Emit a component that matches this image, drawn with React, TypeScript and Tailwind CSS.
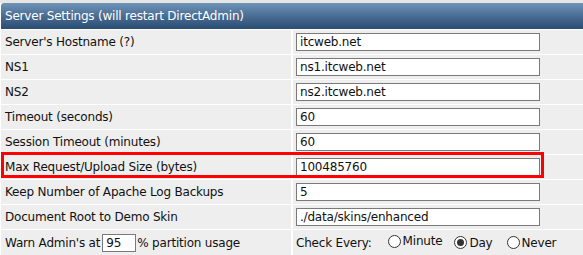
import React from "react";

const font = { fontFamily: "'DejaVu Sans', Verdana, sans-serif" };

function Row({ label, value }: { label: React.ReactNode; value?: string; }) {
  return (
    <>
      <div className="bg-[#eeeeee] h-[24px] flex items-center pl-[4px] text-[12px] tracking-[-0.2px] text-[#111]">{label}</div>
      <div className="bg-[#eeeeee] h-[24px] flex items-center pl-[3px]">
        {value !== undefined && (
          <div className="w-[244px] h-[18px] border border-[#7a7a7a] bg-white flex items-center pl-[3px] text-[12px] tracking-[-0.2px] text-[#111]">
            {value}
          </div>
        )}
      </div>
    </>
  );
}

function Radio({ checked, label }: { checked?: boolean; label: string }) {
  return (
    <span className="inline-flex items-center">
      <span className="w-[13px] h-[13px] rounded-full border border-[#333] bg-white flex items-center justify-center mr-[2px]">
        {checked && <span className="w-[7px] h-[7px] rounded-full bg-[#333]" />}
      </span>
      <span>{label}</span>
    </span>
  );
}

export default function App() {
  return (
    <div className="w-[583px] h-[255px] bg-white overflow-hidden relative" style={font}>
      <div className="bg-[#e6e6e6] h-[3px]" />
      <div className="grid grid-cols-[290px_1fr] gap-x-[2px] gap-y-[1px] bg-white pl-[1px]">
        <div className="col-span-2 h-[26px] rounded-tl-[3px] bg-gradient-to-b from-[#7094b8] via-[#4a6d93] to-[#2b4d72] flex items-center pl-[4px] text-white text-[12px] tracking-[-0.2px]">
          Server Settings (will restart DirectAdmin)
        </div>
        <Row label="Server's Hostname (?)" value="itcweb.net" />
        <Row label="NS1" value="ns1.itcweb.net" />
        <Row label="NS2" value="ns2.itcweb.net" />
        <Row label="Timeout (seconds)" value="60" />
        <Row label="Session Timeout (minutes)" value="60" />
        <Row label="Max Request/Upload Size (bytes)" value="100485760" />
        <Row label="Keep Number of Apache Log Backups" value="5" />
        <Row label="Document Root to Demo Skin" value="./data/skins/enhanced" />
        <div className="bg-[#eeeeee] h-[25px] flex items-center pl-[4px] text-[12px] tracking-[-0.2px] text-[#111]">
          <span>Warn Admin's at</span>
          <span className="ml-[2px] mr-[1px] w-[34px] h-[18px] border border-[#7a7a7a] bg-white flex items-center pl-[3px]">95</span>
          <span>% partition usage</span>
        </div>
        <div className="bg-[#eeeeee] h-[25px] flex items-center pl-[3px] text-[12px] tracking-[-0.2px] text-[#111]">
          <span className="mr-[16px]">Check Every:</span>
          <span className="mr-[12px]"><Radio label="Minute" /></span>
          <span className="mr-[14px]"><Radio checked label="Day" /></span>
          <Radio label="Never" />
        </div>
      </div>
      <div className="absolute left-[1px] top-[152px] w-[543px] h-[26px] border-[3px] border-[#ff0000] pointer-events-none" />
    </div>
  );
}
